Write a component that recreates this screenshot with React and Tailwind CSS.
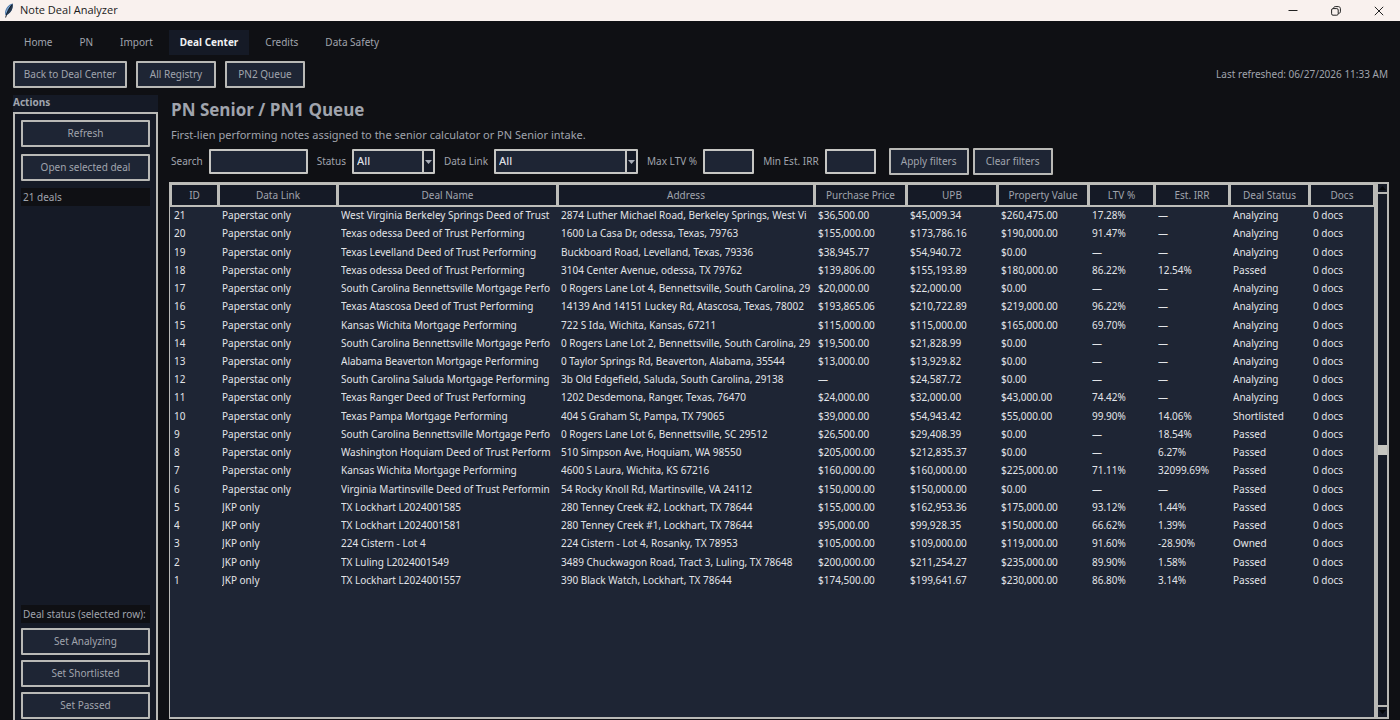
import React from 'react';

const tabs = ['Home', 'PN', 'Import', 'Deal Center', 'Credits', 'Data Safety'];

const columns = [
  ['ID', 'w-[48px]'],
  ['Data Link', 'w-[119px]'],
  ['Deal Name', 'w-[220px]'],
  ['Address', 'w-[257px]'],
  ['Purchase Price', 'w-[92px]'],
  ['UPB', 'w-[91px]'],
  ['Property Value', 'w-[91px]'],
  ['LTV %', 'w-[66px]'],
  ['Est. IRR', 'w-[75px]'],
  ['Deal Status', 'w-[80px]'],
  ['Docs', 'w-[65px]'],
];

const P = 'Paperstac only';
const J = 'JKP only';
const deals = [
  [21, P, 'West Virginia Berkeley Springs Deed of Trust', '2874 Luther Michael Road, Berkeley Springs, West Vi', '$36,500.00', '$45,009.34', '$260,475.00', '17.28%', '—', 'Analyzing'],
  [20, P, 'Texas odessa Deed of Trust Performing', '1600 La Casa Dr, odessa, Texas, 79763', '$155,000.00', '$173,786.16', '$190,000.00', '91.47%', '—', 'Analyzing'],
  [19, P, 'Texas Levelland Deed of Trust Performing', 'Buckboard Road, Levelland, Texas, 79336', '$38,945.77', '$54,940.72', '$0.00', '—', '—', 'Analyzing'],
  [18, P, 'Texas odessa Deed of Trust Performing', '3104 Center Avenue, odessa, TX 79762', '$139,806.00', '$155,193.89', '$180,000.00', '86.22%', '12.54%', 'Passed'],
  [17, P, 'South Carolina Bennettsville Mortgage Perfo', '0 Rogers Lane Lot 4, Bennettsville, South Carolina, 29', '$20,000.00', '$22,000.00', '$0.00', '—', '—', 'Analyzing'],
  [16, P, 'Texas Atascosa Deed of Trust Performing', '14139 And 14151 Luckey Rd, Atascosa, Texas, 78002', '$193,865.06', '$210,722.89', '$219,000.00', '96.22%', '—', 'Analyzing'],
  [15, P, 'Kansas Wichita Mortgage Performing', '722 S Ida, Wichita, Kansas, 67211', '$115,000.00', '$115,000.00', '$165,000.00', '69.70%', '—', 'Analyzing'],
  [14, P, 'South Carolina Bennettsville Mortgage Perfo', '0 Rogers Lane Lot 2, Bennettsville, South Carolina, 29', '$19,500.00', '$21,828.99', '$0.00', '—', '—', 'Analyzing'],
  [13, P, 'Alabama Beaverton Mortgage Performing', '0 Taylor Springs Rd, Beaverton, Alabama, 35544', '$13,000.00', '$13,929.82', '$0.00', '—', '—', 'Analyzing'],
  [12, P, 'South Carolina Saluda Mortgage Performing', '3b Old Edgefield, Saluda, South Carolina, 29138', '—', '$24,587.72', '$0.00', '—', '—', 'Analyzing'],
  [11, P, 'Texas Ranger Deed of Trust Performing', '1202 Desdemona, Ranger, Texas, 76470', '$24,000.00', '$32,000.00', '$43,000.00', '74.42%', '—', 'Analyzing'],
  [10, P, 'Texas Pampa Mortgage Performing', '404 S Graham St, Pampa, TX 79065', '$39,000.00', '$54,943.42', '$55,000.00', '99.90%', '14.06%', 'Shortlisted'],
  [9, P, 'South Carolina Bennettsville Mortgage Perfo', '0 Rogers Lane Lot 6, Bennettsville, SC 29512', '$26,500.00', '$29,408.39', '$0.00', '—', '18.54%', 'Passed'],
  [8, P, 'Washington Hoquiam Deed of Trust Perform', '510 Simpson Ave, Hoquiam, WA 98550', '$205,000.00', '$212,835.37', '$0.00', '—', '6.27%', 'Passed'],
  [7, P, 'Kansas Wichita Mortgage Performing', '4600 S Laura, Wichita, KS 67216', '$160,000.00', '$160,000.00', '$225,000.00', '71.11%', '32099.69%', 'Passed'],
  [6, P, 'Virginia Martinsville Deed of Trust Performin', '54 Rocky Knoll Rd, Martinsville, VA 24112', '$150,000.00', '$150,000.00', '$0.00', '—', '—', 'Passed'],
  [5, J, 'TX Lockhart L2024001585', '280 Tenney Creek #2, Lockhart, TX 78644', '$155,000.00', '$162,953.36', '$175,000.00', '93.12%', '1.44%', 'Passed'],
  [4, J, 'TX Lockhart L2024001581', '280 Tenney Creek #1, Lockhart, TX 78644', '$95,000.00', '$99,928.35', '$150,000.00', '66.62%', '1.39%', 'Passed'],
  [3, J, '224 Cistern - Lot 4', '224 Cistern - Lot 4, Rosanky, TX 78953', '$105,000.00', '$109,000.00', '$119,000.00', '91.60%', '-28.90%', 'Owned'],
  [2, J, 'TX Luling L2024001549', '3489 Chuckwagon Road, Tract 3, Luling, TX 78648', '$200,000.00', '$211,254.27', '$235,000.00', '89.90%', '1.58%', 'Passed'],
  [1, J, 'TX Lockhart L2024001557', '390 Black Watch, Lockhart, TX 78644', '$174,500.00', '$199,641.67', '$230,000.00', '86.80%', '3.14%', 'Passed'],
];

function Button({ children, className = '' }) {
  return (
    <button
      type="button"
      className={`h-[27px] shrink-0 rounded-[1px] border-2 border-[#b9b9b6] bg-[#1e2534] text-center whitespace-nowrap ${className}`}
    >
      {children}
    </button>
  );
}

function TextField({ id, label, className }) {
  return (
    <div className="flex shrink-0 items-center gap-[6px]">
      <label htmlFor={id} className="whitespace-nowrap">{label}</label>
      <input
        id={id}
        type="text"
        className={`h-[25px] rounded-[1px] border-2 border-[#c6c6c3] bg-[#1e2534] px-1 text-[#dcdee2] outline-none ${className}`}
      />
    </div>
  );
}

function SelectField({ id, label, className }) {
  return (
    <div className="flex shrink-0 items-center gap-[6px]">
      <label htmlFor={id} className="whitespace-nowrap">{label}</label>
      <div className={`relative ${className}`}>
        <select
          id={id}
          className="block h-[25px] w-full appearance-none rounded-[1px] border-2 border-[#c6c6c3] bg-[#1e2534] pl-[3px] text-[11px] font-medium text-[#dcdee2] outline-none"
        >
          <option>All</option>
        </select>
        <span className="pointer-events-none absolute inset-y-[2px] right-[2px] flex w-[11px] items-center justify-center border-l-2 border-[#c6c6c3] bg-[#151a26]">
          <svg width="7" height="4" viewBox="0 0 7 4" aria-hidden="true">
            <path d="M0 0h7L3.500 4z" fill="#a9aeb8" />
          </svg>
        </span>
      </div>
    </div>
  );
}

function TitleBar() {
  return (
    <header className="flex h-[21px] shrink-0 items-center bg-[#f9f1ee] pl-1 text-[#1b1b1b]">
      <svg width="10" height="15" viewBox="0 0 10 15" aria-hidden="true">
        <path d="M8.600 0.600C5 1.500 1.700 4.800 1.100 9.200L1.300 12l1.200 0.300C6 10.500 9.600 6 8.600 0.600z" fill="#4a76a8" />
        <path d="M8.600 0.600C6.500 3 4.500 6.500 3 11.800C6.500 10 9.600 6 8.600 0.600z" fill="#27384e" />
        <path d="M7.600 2.200C5 5.500 3 9.500 1.600 14.500" fill="none" stroke="#0d1218" strokeWidth="0.900" />
        <path d="M6.300 2.600C4 4.500 2.600 7 2.300 9.500" fill="none" stroke="#a9c6e2" strokeWidth="0.700" />
      </svg>
      <h1 className="ml-[6px] font-['Open_Sans','Noto_Sans',sans-serif] text-[11px]">Note Deal Analyzer</h1>
      <div className="ml-auto flex h-full">
        <button type="button" aria-label="Minimize" className="flex w-[43px] items-center justify-center">
          <svg width="10" height="10" viewBox="0 0 10 10" fill="none" stroke="#222"><path d="M0.500 4.500h9" /></svg>
        </button>
        <button type="button" aria-label="Restore" className="flex w-[43px] items-center justify-center">
          <svg width="10" height="10" viewBox="0 0 10 10" fill="none" stroke="#222">
            <rect x="0.600" y="2.600" width="6.600" height="6.600" rx="1.400" />
            <path d="M2.600 2.400V2.200C2.600 1.300 3.300 0.600 4.200 0.600H7.400C8.500 0.600 9.400 1.500 9.400 2.600V5.800C9.400 6.700 8.700 7.300 7.400 7.400" />
          </svg>
        </button>
        <button type="button" aria-label="Close" className="flex w-[43px] items-center justify-center">
          <svg width="10" height="10" viewBox="0 0 10 10" fill="none" stroke="#222"><path d="M0.800 0.800l8.400 8.400M9.200 0.800L0.800 9.200" /></svg>
        </button>
      </div>
    </header>
  );
}

function Sidebar() {
  return (
    <aside className="flex w-[145px] shrink-0 flex-col">
      <h2 className="h-[17px] bg-[#151a26] leading-[15px] font-bold">Actions</h2>
      <div className="flex flex-1 flex-col border-2 border-b-0 border-[#b9b9b6] bg-[#151a26] px-[6px] pt-[6px] pb-px">
        <Button>Refresh</Button>
        <Button className="mt-[7px]">Open selected deal</Button>
        <p className="mt-[7px] h-[18px] bg-[#0f1014] pl-[2px] leading-[18px]">21 deals</p>
        <div className="mt-auto flex flex-col gap-[5px]">
          <p className="h-[18px] bg-[#0f1014] pl-[2px] leading-[18px] whitespace-nowrap">Deal status (selected row):</p>
          <Button>Set Analyzing</Button>
          <Button>Set Shortlisted</Button>
          <Button>Set Passed</Button>
        </div>
      </div>
    </aside>
  );
}

function DealTable() {
  return (
    <div className="min-w-0 flex-1 overflow-hidden border border-r-2 border-b-2 border-[#b9b9b6] bg-[#1e2534]">
      <table className="h-[407px] w-full table-fixed border-separate border-spacing-0">
        <thead>
          <tr>
            {columns.map(([name, width]) => (
              <th
                key={name}
                className={`h-[24px] border-2 border-r border-[#bdbdb9] bg-[#151a26] p-0 text-center leading-[18px] font-normal whitespace-nowrap ${width}`}
              >
                {name}
              </th>
            ))}
          </tr>
        </thead>
        <tbody className="text-[#e2e4e8]">
          {deals.map((deal) => (
            <tr key={deal[0]}>
              {[...deal, '0 docs'].map((value, i) => (
                <td key={columns[i][0]} className="pt-0 pr-px pb-[2px] pl-1 leading-[16px] whitespace-nowrap">
                  <div className="overflow-hidden">{value}</div>
                </td>
              ))}
            </tr>
          ))}
        </tbody>
      </table>
    </div>
  );
}

function ScrollBar() {
  return (
    <div className="flex w-[13px] shrink-0 flex-col border-2 border-[#b9b9b6] bg-[#151a26]">
      <button type="button" aria-label="Scroll up" className="flex h-[10px] items-center justify-center border-b-2 border-[#b9b9b6]">
        <svg width="7" height="4" viewBox="0 0 7 4"><path d="M0 4h7L3.500 0z" fill="#05070a" /></svg>
      </button>
      <div className="flex flex-1 items-center">
        <div className="h-[10px] w-full bg-[#c6c6c0]" />
      </div>
      <button type="button" aria-label="Scroll down" className="flex h-[12px] items-center justify-center border-t-2 border-[#b9b9b6]">
        <svg width="7" height="4" viewBox="0 0 7 4"><path d="M0 0h7L3.500 4z" fill="#05070a" /></svg>
      </button>
    </div>
  );
}

export default function App() {
  return (
    <div className="flex h-screen flex-col overflow-hidden bg-[#0f1014] font-['Noto_Sans','Open_Sans',sans-serif] text-[10px] text-[#a0a4ad]">
      <TitleBar />
      <nav className="mt-[9px] flex h-[25px] shrink-0 gap-[5px] pl-[13px]">
        {tabs.map((tab) => (
          <a
            key={tab}
            href="#"
            className={`flex items-center px-[11px] whitespace-nowrap ${tab === 'Deal Center' ? 'bg-[#151a26] font-bold text-[#f0f1f3]' : ''}`}
          >
            {tab}
          </a>
        ))}
      </nav>
      <div className="mt-[6px] flex shrink-0 items-center gap-[9px] pr-3 pl-[13px]">
        <Button className="w-[114px]">Back to Deal Center</Button>
        <Button className="w-[80px]">All Registry</Button>
        <Button className="w-[80px]">PN2 Queue</Button>
        <p className="ml-auto whitespace-nowrap">Last refreshed: 06/27/2026 11:33 AM</p>
      </div>
      <div className="mt-[7px] flex min-h-0 flex-1 gap-[11px] pr-[11px] pl-[13px]">
        <Sidebar />
        <main className="flex min-w-0 flex-1 flex-col pb-px">
          <h2 className="mt-[3px] pl-[2px] font-['Open_Sans','Noto_Sans',sans-serif] text-[17px] leading-[24px] font-bold">PN Senior / PN1 Queue</h2>
          <p className="mt-[4px] pl-[2px] text-[11px] leading-[18px]">
            First-lien performing notes assigned to the senior calculator or PN Senior intake.
          </p>
          <form className="mt-[4px] flex items-center gap-[9px] pl-[2px]" onSubmit={(e) => e.preventDefault()}>
            <TextField id="search" label="Search" className="w-[99px]" />
            <SelectField id="status" label="Status" className="w-[83px]" />
            <SelectField id="link" label="Data Link" className="w-[144px]" />
            <TextField id="ltv" label="Max LTV %" className="w-[51px]" />
            <TextField id="irr" label="Min Est. IRR" className="w-[51px]" />
            <div className="ml-[4px] flex gap-[4px]">
              <Button className="w-[80px]">Apply filters</Button>
              <Button className="w-[80px]">Clear filters</Button>
            </div>
          </form>
          <div className="mt-[7px] flex min-h-0 flex-1">
            <DealTable />
            <ScrollBar />
          </div>
        </main>
      </div>
    </div>
  );
}
